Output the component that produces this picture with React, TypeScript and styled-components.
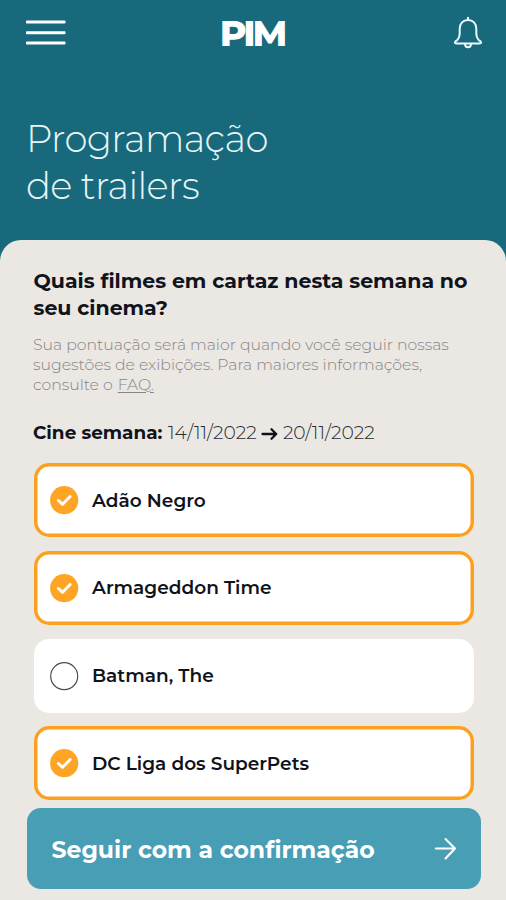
import React, { useState } from "react";
import styled, { createGlobalStyle } from "styled-components";

const GlobalStyle = createGlobalStyle`
  *, *::before, *::after { box-sizing: border-box; }
  html, body { margin: 0; padding: 0; }
  body {
    background: #18697b;
    font-family: Montserrat, Inter, sans-serif;
    color: #11131c;
  }
  button { font: inherit; color: inherit; border: 0; padding: 0; background: none; cursor: pointer; }
`;

const Screen = styled.div`
  display: flex;
  flex-direction: column;
  width: 100%;
  height: 900px;
  overflow: hidden;
  background: #18697b;
`;

const TopBar = styled.header`
  display: grid;
  grid-template-columns: 1fr auto 1fr;
  align-items: center;
  height: 65px;
  padding: 0 23px 0 26px;
  color: #fff;
`;

const IconButton = styled.button<{ $end?: boolean }>`
  display: flex;
  justify-self: ${(p) => (p.$end ? "end" : "start")};
`;

const Logo = styled.span`
  margin: 0 5px 0 0;
  font-size: 36.5px;
  font-weight: 800;
  line-height: 40px;
  letter-spacing: -3px;
`;

const PageTitle = styled.h1`
  margin: 49.5px 0 0 26px;
  font-size: 37px;
  font-weight: 300;
  line-height: 47px;
  letter-spacing: -0.6px;
  color: #e6f5f8;
`;

const Line = styled.span`
  display: block;
  white-space: nowrap;
`;

const Panel = styled.main`
  display: flex;
  flex-direction: column;
  flex: 1;
  min-height: 0;
  margin-top: 31.5px;
  padding: 26.5px 25.5px 11px 26.5px;
  border-radius: 21px 21px 0 0;
  background: #ebe7e2;
`;

const Question = styled.h2`
  margin: 0 0 13px 7px;
  font-size: 20.5px;
  font-weight: 700;
  line-height: 27.5px;
`;

const Hint = styled.p`
  margin: 0 0 26px 6.5px;
  font-size: 15.68px;
  font-weight: 300;
  line-height: 20px;
  color: #858487;
`;

const FaqLink = styled.a`
  margin-left: 1px;
  color: inherit;
  text-decoration: underline;
  text-decoration-thickness: 1px;
  text-underline-offset: 2px;
`;

const WeekRow = styled.div`
  display: flex;
  align-items: center;
  margin-left: 6.5px;
  height: 24px;
  font-size: 18.4px;
  line-height: 24px;
`;

const WeekLabel = styled.strong`
  width: 135px;
  font-weight: 700;
  white-space: nowrap;
`;

const WeekDate = styled.span`
  font-size: 18.7px;
  font-weight: 300;
  color: #292b33;
`;

const WeekArrow = styled.svg`
  margin: 2px 5px 0 4px;
`;

const MovieList = styled.ul`
  display: flex;
  flex-direction: column;
  gap: 13.7px;
  margin: 18.8px 7px 0;
  padding: 0;
  list-style: none;
`;

const MovieCard = styled.button<{ $selected: boolean }>`
  display: flex;
  align-items: center;
  gap: 13px;
  width: 100%;
  height: 74px;
  padding: 0 16.5px;
  border-radius: 15px;
  background: #fff;
  box-shadow: ${(p) => (p.$selected ? "inset 0 0 0 3.5px #fba01f" : "none")};
  text-align: left;
`;

const MovieName = styled.span`
  margin-top: 1px;
  font-size: 18.55px;
  font-weight: 650;
  line-height: 24px;
  white-space: nowrap;
`;

const ConfirmButton = styled.button`
  display: flex;
  flex: none;
  align-items: center;
  justify-content: space-between;
  height: 81px;
  margin-top: auto;
  padding: 1px 24px 0 25px;
  border-radius: 14px;
  background: #479eb5;
  color: #fff;
  font-size: 23.55px;
  font-weight: 700;
`;

const MenuIcon = () => (
  <svg width="40" height="28" viewBox="0 0 40 28" fill="#fff">
    <rect x="0" y="1.5" width="39.5" height="3" rx="0.8" />
    <rect x="0" y="12.2" width="39.5" height="3" rx="0.8" />
    <rect x="0" y="22.6" width="39.5" height="3" rx="0.8" />
  </svg>
);

const BellIcon = () => (
  <svg width="30" height="34" viewBox="0 0 30 34" fill="none" stroke="#e9fbff" strokeWidth="2" strokeLinecap="round" strokeLinejoin="round">
    <path d="M15 1.7V4M15 4C10 4 6.7 7.6 6.7 12.5V17.8C6.7 20.6 6 22 4.6 23.6C3.2 25.1 1.9 25.4 1.9 26.6C1.9 27.4 2.6 27.6 3.5 27.6H26.5C27.4 27.6 28.1 27.4 28.1 26.6C28.1 25.4 26.8 25.1 25.4 23.6C24 22 23.3 20.6 23.3 17.8V12.5C23.3 7.6 20 4 15 4Z" />
    <path d="M12.1 28.2C12.1 30.3 13.2 31.2 15 31.2C16.8 31.2 17.9 30.3 17.9 28.2" />
  </svg>
);

const CheckMark = ({ selected }: { selected: boolean }) => (
  <svg width="29" height="30" viewBox="0 0 29 30" fill="none">
    {selected ? (
      <>
        <circle cx="14.2" cy="15.2" r="14.1" fill="#ffa526" />
        <path d="M8.4 15.5L12.6 19.3L20.2 11.6" stroke="#fff" strokeWidth="2.9" strokeLinecap="round" strokeLinejoin="round" />
      </>
    ) : (
      <circle cx="14.2" cy="15.2" r="13.5" stroke="#4a4c50" strokeWidth="1.2" />
    )}
  </svg>
);

const movies = [
  { name: "Adão Negro", selected: true },
  { name: "Armageddon Time", selected: true },
  { name: "Batman, The", selected: false },
  { name: "DC Liga dos SuperPets", selected: true },
];

export default function App() {
  const [picked, setPicked] = useState(movies.map((m) => m.selected));
  const toggle = (index: number) => setPicked((list) => list.map((v, i) => (i === index ? !v : v)));

  return (
    <Screen>
      <GlobalStyle />
      <TopBar>
        <IconButton aria-label="Menu"><MenuIcon /></IconButton>
        <Logo>PIM</Logo>
        <IconButton $end aria-label="Notificações"><BellIcon /></IconButton>
      </TopBar>
      <PageTitle>
        <Line>Programação</Line>
        <Line>de trailers</Line>
      </PageTitle>
      <Panel>
        <Question>
          <Line>Quais filmes em cartaz nesta semana no</Line>
          <Line>seu cinema?</Line>
        </Question>
        <Hint>
          <Line>Sua pontuação será maior quando você seguir nossas</Line>
          <Line>sugestões de exibições. Para maiores informações,</Line>
          <Line>consulte o <FaqLink>FAQ.</FaqLink></Line>
        </Hint>
        <WeekRow>
          <WeekLabel>Cine semana:</WeekLabel>
          <WeekDate>14/11/2022</WeekDate>
          <WeekArrow width="17" height="14" viewBox="0 0 17 14" fill="none" stroke="#11131c" strokeWidth="2.3" strokeLinecap="round" strokeLinejoin="round">
            <path d="M1.5 7H15M10.5 2.2L15.2 7L10.5 11.8" />
          </WeekArrow>
          <WeekDate>20/11/2022</WeekDate>
        </WeekRow>
        <MovieList>
          {movies.map((movie, i) => (
            <li key={movie.name}>
              <MovieCard $selected={picked[i]} aria-pressed={picked[i]} onClick={() => toggle(i)}>
                <CheckMark selected={picked[i]} />
                <MovieName>{movie.name}</MovieName>
              </MovieCard>
            </li>
          ))}
        </MovieList>
        <ConfirmButton>
          Seguir com a confirmação
          <svg width="23" height="24" viewBox="0 0 23 24" fill="none" stroke="#fff" strokeWidth="2.1" strokeLinecap="round" strokeLinejoin="round">
            <path d="M1.8 11.5H21M11.5 2L21 11.5L11.5 21.5" />
          </svg>
        </ConfirmButton>
      </Panel>
    </Screen>
  );
}
